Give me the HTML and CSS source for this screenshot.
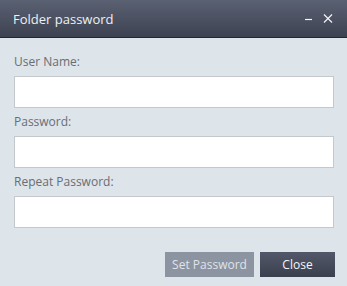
FILE: index.html
```html
<!DOCTYPE html>
<html lang="en">

<head>
    <meta charset="UTF-8">
    <meta name="viewport" content="width=device-width, initial-scale=1.0">
    <title>Folder password</title>
    <link rel="stylesheet" href="styles.css">
</head>

<body>
    <div class="dialog">
        <div class="titlebar">
            <div class="title">Folder password</div>
            <div class="controls">
                <svg class="ctl" viewBox="0 0 10 10" width="10" height="10">
                    <path d="M0 5.5h7" stroke="#f2f4f8" stroke-width="1.2" />
                </svg>
                <svg class="ctl" viewBox="0 0 10 10" width="10" height="10">
                    <path d="M1 0.5l8 8M9 0.5l-8 8" stroke="#f2f4f8" stroke-width="1.2" />
                </svg>
            </div>
        </div>
        <div class="content">
            <div class="label">User Name:</div>
            <input class="field" type="text">
            <div class="label">Password:</div>
            <input class="field" type="password">
            <div class="label">Repeat Password:</div>
            <input class="field" type="password">
            <div class="buttons">
                <div class="btn set">Set Password</div>
                <div class="btn close">Close</div>
            </div>
        </div>
    </div>
</body>

</html>
```
FILE: styles.css
```css
body {
    font-family: "Open Sans", sans-serif;
    margin: 0;
    background-color: #dde4ea;
}

.dialog {
    width: 347px;
    height: 286px;
    display: flex;
    flex-direction: column;
    background-color: #dde4ea;
}

.titlebar {
    height: 37px;
    display: flex;
    align-items: center;
    justify-content: space-between;
    padding: 0 14px 0 13px;
    background: linear-gradient(#5a6172, #3d4251);
    border-bottom: 1px solid #23262e;
}

.title {
    color: #eef0f4;
    font-size: 13px;
}

.controls {
    display: flex;
    gap: 8px;
    align-items: center;
}

.content {
    padding: 14px 13px 0 14px;
    display: flex;
    flex-direction: column;
}

.label {
    font-size: 12px;
    line-height: 20px;
    color: #6a6d72;
    margin: 4px 0;
}

.label:first-child {
    margin-top: 0;
}

.field {
    box-sizing: border-box;
    width: 320px;
    height: 32px;
    margin: 0;
    border: 1px solid #c4c7cb;
    background-color: #fff;
    outline: none;
}

.buttons {
    display: flex;
    justify-content: flex-end;
    gap: 6px;
    margin-top: 24px;
    margin-right: -1px;
}

.btn {
    height: 25px;
    display: grid;
    place-items: center;
    font-size: 12px;
}

.set {
    width: 89px;
    background-color: #8d94a1;
    color: #dfe3ea;
}

.close {
    width: 75px;
    background: linear-gradient(#525869, #3b404e);
    color: #f4f5f7;
}
```
